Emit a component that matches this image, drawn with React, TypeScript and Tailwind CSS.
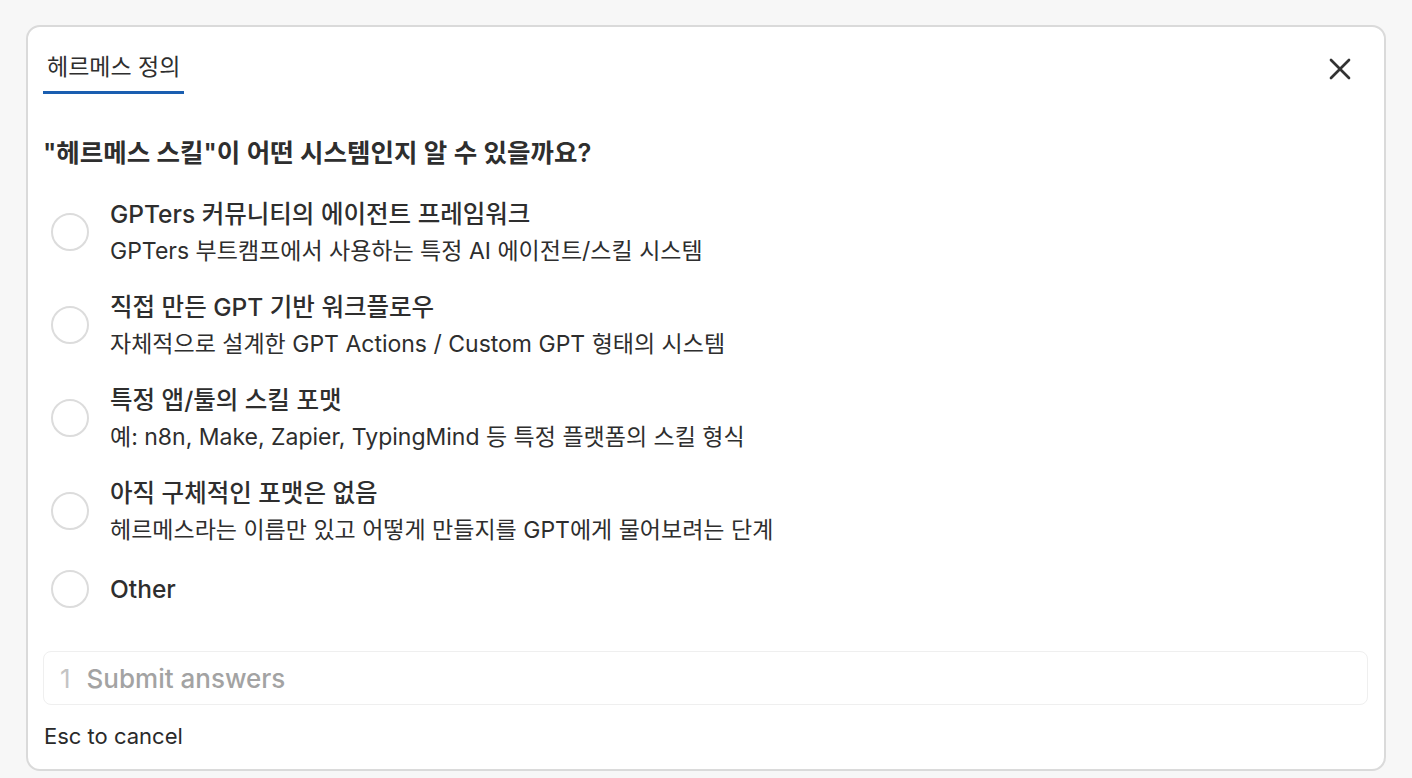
import { X } from "lucide-react";

const options = [
  {
    title: "GPTers 커뮤니티의 에이전트 프레임워크",
    desc: "GPTers 부트캠프에서 사용하는 특정 AI 에이전트/스킬 시스템",
  },
  {
    title: "직접 만든 GPT 기반 워크플로우",
    desc: "자체적으로 설계한 GPT Actions / Custom GPT 형태의 시스템",
  },
  {
    title: "특정 앱/툴의 스킬 포맷",
    desc: "예: n8n, Make, Zapier, TypingMind 등 특정 플랫폼의 스킬 형식",
  },
  {
    title: "아직 구체적인 포맷은 없음",
    desc: "헤르메스라는 이름만 있고 어떻게 만들지를 GPT에게 물어보려는 단계",
  },
];

function Radio() {
  return <div className="w-[38px] h-[38px] shrink-0 rounded-full border-2 border-[#dcdcdc] bg-white" />;
}

export default function App() {
  return (
    <div
      className="min-h-screen bg-[#f7f7f7] pt-[25px] px-[26px] pb-[7px] text-[#2e2e2e]"
      style={{ fontFamily: '"Inter", "Noto Sans CJK KR", sans-serif' }}
    >
      <div className="h-[746px] flex flex-col rounded-[14px] border-2 border-[#dadada] bg-white pl-[15px] pr-[16px]">
        <div className="flex items-start justify-between">
          <div className="mt-[25px] px-1 pb-[9px] border-b-[3px] border-[#1a5eb0] text-[23px] leading-[30px] w-[141px] whitespace-nowrap">
            헤르메스 정의
          </div>
          <button className="mt-[24px] mr-[10px] text-[#333]">
            <X size={36} strokeWidth={1.8} />
          </button>
        </div>

        <h2 className="mt-[43px] text-[25.5px] leading-[32px] font-semibold">
          "헤르메스 스킬"이 어떤 시스템인지 알 수 있을까요?
        </h2>

        <div className="mt-[26px] flex flex-col gap-[19px]">
          {options.map((o) => (
            <div key={o.title} className="flex items-center gap-[21px] pl-[8px]">
              <Radio />
              <div className="flex flex-col">
                <span className="text-[24.5px] leading-[38px] font-medium">{o.title}</span>
                <span className="text-[23px] leading-[36px]">{o.desc}</span>
              </div>
            </div>
          ))}
          <div className="mt-[3px] flex items-center gap-[21px] pl-[8px]">
            <Radio />
            <span className="text-[24.5px] leading-[38px] font-medium">Other</span>
          </div>
        </div>

        <div className="mt-[43px] h-[54px] flex items-center gap-[16px] px-[16px] rounded-[8px] border border-[#efefef] text-[26px]">
          <span className="text-[#c4c4c4]">1</span>
          <span className="text-[#a3a3a3] font-medium">Submit answers</span>
        </div>

        <div className="mt-[16px] text-[22px] leading-[30px] pl-[1px] text-[#2a2a2a]">Esc to cancel</div>
      </div>
    </div>
  );
}
